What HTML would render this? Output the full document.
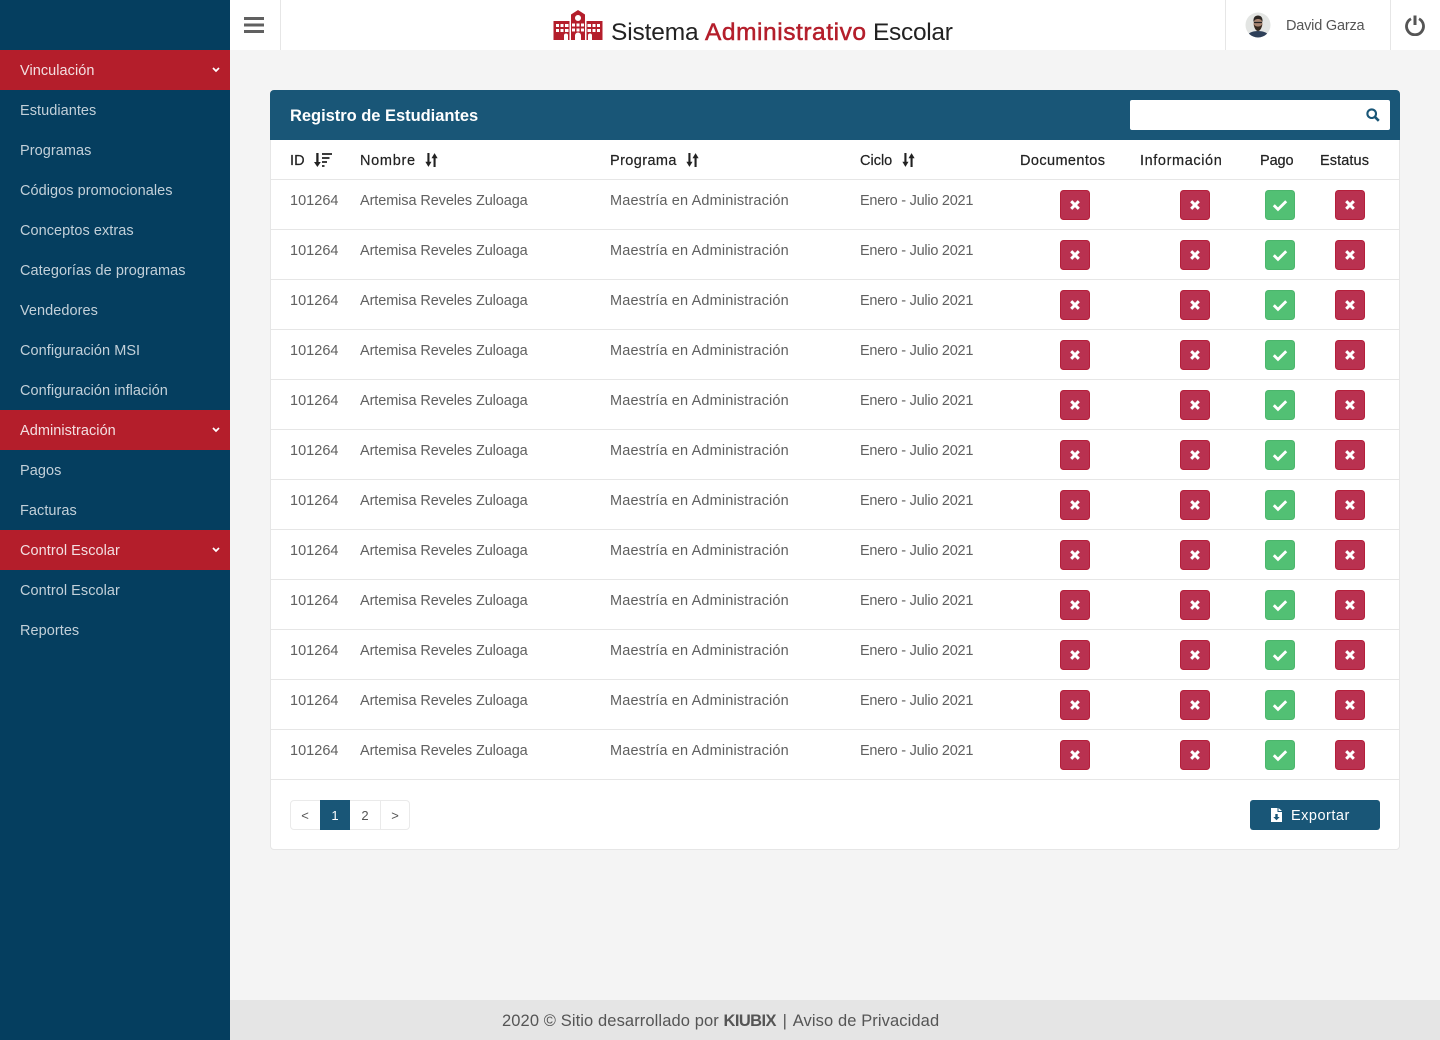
<!DOCTYPE html>
<html lang="es">
<head>
<meta charset="utf-8">
<title>Sistema Administrativo Escolar</title>
<style>
*{box-sizing:border-box}
html,body{margin:0;padding:0}
body{width:1440px;height:1040px;position:relative;overflow:hidden;background:#f4f4f4;font-family:"Liberation Sans",sans-serif;font-size:14.5px;color:#555}
.a{position:absolute;white-space:nowrap}
#side{position:absolute;left:0;top:0;width:230px;height:1040px;background:#053e5f}
.mi{position:absolute;left:0;width:230px;height:40px;line-height:42px;padding-left:20px;color:#c3d0d9;letter-spacing:.05px}
.mi.r{background:#b41e2b;color:#f3dfe1}
.mi svg{position:absolute;left:212px;top:17px}
#top{position:absolute;left:230px;top:0;width:1210px;height:50px;background:#fff}
.vl{position:absolute;top:0;width:1px;height:50px;background:#e6e6e6}
#card{position:absolute;left:270px;top:90px;width:1130px;height:760px;background:#fff;border:1px solid #e6e6e6;border-radius:4px}
#ch{position:absolute;left:270px;top:90px;width:1130px;height:50px;background:#195677;border-radius:4px 4px 0 0}
.row{position:absolute;left:271px;width:1128px;height:50px;border-bottom:1px solid #e6e6e6;color:#606060}
.row span{position:absolute;top:11px;line-height:20px;white-space:nowrap}
.row span:nth-child(1){letter-spacing:.02px}
.row span:nth-child(2){letter-spacing:-.1px}
.row span:nth-child(3){letter-spacing:.15px}
.row span:nth-child(4){letter-spacing:-.25px}
.row svg{position:absolute;top:10px}
.h{position:absolute;top:151px;line-height:20px;color:#222;letter-spacing:.4px;white-space:nowrap;-webkit-text-stroke:.2px #222}
.pg{position:absolute;top:800px;height:30px;width:30px;text-align:center;line-height:31px;font-size:13px;background:#fff;color:#555}
</style>
</head>
<body>
<svg width="0" height="0" style="position:absolute">
<defs>
<symbol id="x" viewBox="0 0 30 30"><rect x=".5" y=".5" width="29" height="29" rx="3" fill="#b93150" stroke="#b41e3a"/><path d="M11.2 11.200l7.600 7.600M18.800 11.200l-7.600 7.600" stroke="#fff" stroke-width="3" fill="none"/></symbol>
<symbol id="c" viewBox="0 0 30 30"><rect x=".5" y=".5" width="29" height="29" rx="3" fill="#52c074" stroke="#4bb56c"/><path d="M8.800 15.200l4.200 4.200 8.200-8.200" stroke="#fff" stroke-width="2.800" fill="none"/></symbol>
<symbol id="s" viewBox="0 0 14 16"><path d="M3.500 0v11" stroke="#222" stroke-width="2.400"/><path d="M0 10h7l-3.500 5.800z" fill="#222"/><path d="M10.500 16V5" stroke="#222" stroke-width="2.400"/><path d="M7 6h7L10.500 .2z" fill="#222"/></symbol>
</defs>
</svg>

<div id="side">
<div class="mi r" style="top:50px">Vinculación<svg width="8" height="6" viewBox="0 0 8 6"><path d="M1 1l3 3 3-3" stroke="#fff" stroke-width="1.700" fill="none"/></svg></div>
<div class="mi" style="top:90px">Estudiantes</div>
<div class="mi" style="top:130px">Programas</div>
<div class="mi" style="top:170px">Códigos promocionales</div>
<div class="mi" style="top:210px">Conceptos extras</div>
<div class="mi" style="top:250px">Categorías de programas</div>
<div class="mi" style="top:290px">Vendedores</div>
<div class="mi" style="top:330px">Configuración MSI</div>
<div class="mi" style="top:370px">Configuración inflación</div>
<div class="mi r" style="top:410px">Administración<svg width="8" height="6" viewBox="0 0 8 6"><path d="M1 1l3 3 3-3" stroke="#fff" stroke-width="1.700" fill="none"/></svg></div>
<div class="mi" style="top:450px">Pagos</div>
<div class="mi" style="top:490px">Facturas</div>
<div class="mi r" style="top:530px">Control Escolar<svg width="8" height="6" viewBox="0 0 8 6"><path d="M1 1l3 3 3-3" stroke="#fff" stroke-width="1.700" fill="none"/></svg></div>
<div class="mi" style="top:570px">Control Escolar</div>
<div class="mi" style="top:610px">Reportes</div>
</div>

<div id="top">
<div class="vl" style="left:50px"></div>
<div class="vl" style="left:995px"></div>
<div class="vl" style="left:1160px"></div>
</div>

<svg class="a" style="left:244px;top:17px" width="20" height="16" viewBox="0 0 20 16"><path d="M0 0h20v3H0zM0 6.500h20v3H0zM0 13h20v3H0z" fill="#606060"/></svg>

<svg class="a" style="left:553px;top:10px" width="50" height="30" viewBox="0 0 50 30">
<path fill-rule="evenodd" fill="#b41e2b" d="M25 0l7 4.500V11h17.500v19H39v-4.500a2 2 0 0 0-4 0V30h-7v-4.500a3 3 0 0 0-6 0V30h-7v-4.500a2 2 0 0 0-4 0V30H.5V11H18V4.500zM25 5a3 3 0 1 0 .01 0zM3 14v3h3v-3zM7.500 14v3h3v-3zM12 14v3h3.500v-3zM3 19v3h3v-3zM7.500 19v3h3v-3zM12 19v3h3.500v-3zM19 13.500v3h3v-3zM23.500 13.500v3h3v-3zM28 13.500v3h3v-3zM19 18.500v3h3v-3zM23.500 18.500v3h3v-3zM28 18.500v3h3v-3zM34.500 14v3H38v-3zM39.500 14v3h3v-3zM44 14v3h3v-3zM34.500 19v3H38v-3zM39.500 19v3h3v-3zM44 19v3h3v-3z"/>
<path fill="#fff" d="M16.500 11h1.500v19h-1.500zM32 11h1.500v19H32z"/>
</svg>
<div class="a" style="left:611px;top:18px;line-height:30px;font-size:24.500px;color:#222;letter-spacing:-.15px">Sistema</div>
<div class="a" style="left:705px;top:18px;line-height:30px;font-size:24.500px;color:#b41e2b;letter-spacing:.55px;-webkit-text-stroke:.5px #b41e2b">Administrativo</div>
<div class="a" style="left:873px;top:18px;line-height:30px;font-size:24.500px;color:#222;letter-spacing:-.3px">Escolar</div>

<svg class="a" style="left:1245px;top:12px" width="26" height="26" viewBox="0 0 26 26">
<defs><clipPath id="av"><circle cx="13" cy="13" r="12.500"/></clipPath></defs>
<circle cx="13" cy="13" r="12.500" fill="#e3e5e3"/>
<g clip-path="url(#av)">
<path d="M2 26c0-5 5-7 11-7s11 2 11 7z" fill="#2e3f58"/>
<ellipse cx="13" cy="11.500" rx="4.500" ry="6.500" fill="#a98672"/>
<path d="M8.500 10c-.5-5 2-6.500 4.500-6.500S18 5 17.500 10c-1-2-2-3-4.500-3S9.500 8 8.500 10z" fill="#2c2622"/>
<path d="M8.800 12c.5 5 2.500 7 4.200 7s3.700-2 4.200-7c-1 2-2.500 2.500-4.200 2.500S9.800 14 8.800 12z" fill="#35291f"/>
<path d="M9 10.500h8" stroke="#222" stroke-width="1.200"/>
</g>
</svg>
<div class="a" style="left:1286px;top:16px;line-height:20px;color:#555;letter-spacing:-.2px">David Garza</div>

<svg class="a" style="left:1405px;top:15px" width="20" height="21" viewBox="0 0 20 21"><path d="M6 3.800a8.500 8.500 0 1 0 8 0" stroke="#555" stroke-width="2.800" fill="none"/><path d="M10 .5v9.500" stroke="#555" stroke-width="3" fill="none"/></svg>

<div id="card"></div>
<div id="ch"></div>
<div class="a" style="left:290px;top:106px;line-height:20px;font-size:16.500px;font-weight:bold;color:#fff;letter-spacing:-.03px">Registro de Estudiantes</div>
<div class="a" style="left:1130px;top:100px;width:260px;height:30px;background:#fff;border-radius:2px"></div>
<svg class="a" style="left:1366px;top:108px" width="14" height="14" viewBox="0 0 14 14"><circle cx="5.700" cy="5.700" r="4.300" stroke="#195677" stroke-width="2.100" fill="none"/><path d="M8.800 8.800l4 4" stroke="#195677" stroke-width="2.600"/></svg>

<div class="h" style="left:290px;letter-spacing:.1px">ID</div>
<svg class="a" style="left:314px;top:153px" width="18" height="14" viewBox="0 0 18 14"><path d="M3.400 0v10" stroke="#222" stroke-width="2.300"/><path d="M0 9h6.800l-3.400 5z" fill="#222"/><path d="M8 1h10M8 5h7.500M8 9h5M8 13h2.500" stroke="#222" stroke-width="1.700"/></svg>
<div class="h" style="left:360px;letter-spacing:.7px">Nombre</div>
<svg class="a" style="left:425px;top:153px" width="13" height="14" viewBox="0 0 14 16"><use href="#s"/></svg>
<div class="h" style="left:610px">Programa</div>
<svg class="a" style="left:686px;top:153px" width="13" height="14" viewBox="0 0 14 16"><use href="#s"/></svg>
<div class="h" style="left:860px;letter-spacing:0">Ciclo</div>
<svg class="a" style="left:902px;top:153px" width="13" height="14" viewBox="0 0 14 16"><use href="#s"/></svg>
<div class="h" style="left:1020px">Documentos</div>
<div class="h" style="left:1140px;letter-spacing:.6px">Información</div>
<div class="h" style="left:1260px;letter-spacing:-.1px">Pago</div>
<div class="h" style="left:1320px;letter-spacing:.1px">Estatus</div>
<div class="a" style="left:271px;top:179px;width:1128px;height:1px;background:#e6e6e6"></div>

<div class="row" style="top:180px"><span style="left:19px">101264</span><span style="left:89px">Artemisa Reveles Zuloaga</span><span style="left:339px">Maestría en Administración</span><span style="left:589px">Enero - Julio 2021</span><svg style="left:789px" width="30" height="30"><use href="#x"/></svg><svg style="left:909px" width="30" height="30"><use href="#x"/></svg><svg style="left:994px" width="30" height="30"><use href="#c"/></svg><svg style="left:1064px" width="30" height="30"><use href="#x"/></svg></div>
<div class="row" style="top:230px"><span style="left:19px">101264</span><span style="left:89px">Artemisa Reveles Zuloaga</span><span style="left:339px">Maestría en Administración</span><span style="left:589px">Enero - Julio 2021</span><svg style="left:789px" width="30" height="30"><use href="#x"/></svg><svg style="left:909px" width="30" height="30"><use href="#x"/></svg><svg style="left:994px" width="30" height="30"><use href="#c"/></svg><svg style="left:1064px" width="30" height="30"><use href="#x"/></svg></div>
<div class="row" style="top:280px"><span style="left:19px">101264</span><span style="left:89px">Artemisa Reveles Zuloaga</span><span style="left:339px">Maestría en Administración</span><span style="left:589px">Enero - Julio 2021</span><svg style="left:789px" width="30" height="30"><use href="#x"/></svg><svg style="left:909px" width="30" height="30"><use href="#x"/></svg><svg style="left:994px" width="30" height="30"><use href="#c"/></svg><svg style="left:1064px" width="30" height="30"><use href="#x"/></svg></div>
<div class="row" style="top:330px"><span style="left:19px">101264</span><span style="left:89px">Artemisa Reveles Zuloaga</span><span style="left:339px">Maestría en Administración</span><span style="left:589px">Enero - Julio 2021</span><svg style="left:789px" width="30" height="30"><use href="#x"/></svg><svg style="left:909px" width="30" height="30"><use href="#x"/></svg><svg style="left:994px" width="30" height="30"><use href="#c"/></svg><svg style="left:1064px" width="30" height="30"><use href="#x"/></svg></div>
<div class="row" style="top:380px"><span style="left:19px">101264</span><span style="left:89px">Artemisa Reveles Zuloaga</span><span style="left:339px">Maestría en Administración</span><span style="left:589px">Enero - Julio 2021</span><svg style="left:789px" width="30" height="30"><use href="#x"/></svg><svg style="left:909px" width="30" height="30"><use href="#x"/></svg><svg style="left:994px" width="30" height="30"><use href="#c"/></svg><svg style="left:1064px" width="30" height="30"><use href="#x"/></svg></div>
<div class="row" style="top:430px"><span style="left:19px">101264</span><span style="left:89px">Artemisa Reveles Zuloaga</span><span style="left:339px">Maestría en Administración</span><span style="left:589px">Enero - Julio 2021</span><svg style="left:789px" width="30" height="30"><use href="#x"/></svg><svg style="left:909px" width="30" height="30"><use href="#x"/></svg><svg style="left:994px" width="30" height="30"><use href="#c"/></svg><svg style="left:1064px" width="30" height="30"><use href="#x"/></svg></div>
<div class="row" style="top:480px"><span style="left:19px">101264</span><span style="left:89px">Artemisa Reveles Zuloaga</span><span style="left:339px">Maestría en Administración</span><span style="left:589px">Enero - Julio 2021</span><svg style="left:789px" width="30" height="30"><use href="#x"/></svg><svg style="left:909px" width="30" height="30"><use href="#x"/></svg><svg style="left:994px" width="30" height="30"><use href="#c"/></svg><svg style="left:1064px" width="30" height="30"><use href="#x"/></svg></div>
<div class="row" style="top:530px"><span style="left:19px">101264</span><span style="left:89px">Artemisa Reveles Zuloaga</span><span style="left:339px">Maestría en Administración</span><span style="left:589px">Enero - Julio 2021</span><svg style="left:789px" width="30" height="30"><use href="#x"/></svg><svg style="left:909px" width="30" height="30"><use href="#x"/></svg><svg style="left:994px" width="30" height="30"><use href="#c"/></svg><svg style="left:1064px" width="30" height="30"><use href="#x"/></svg></div>
<div class="row" style="top:580px"><span style="left:19px">101264</span><span style="left:89px">Artemisa Reveles Zuloaga</span><span style="left:339px">Maestría en Administración</span><span style="left:589px">Enero - Julio 2021</span><svg style="left:789px" width="30" height="30"><use href="#x"/></svg><svg style="left:909px" width="30" height="30"><use href="#x"/></svg><svg style="left:994px" width="30" height="30"><use href="#c"/></svg><svg style="left:1064px" width="30" height="30"><use href="#x"/></svg></div>
<div class="row" style="top:630px"><span style="left:19px">101264</span><span style="left:89px">Artemisa Reveles Zuloaga</span><span style="left:339px">Maestría en Administración</span><span style="left:589px">Enero - Julio 2021</span><svg style="left:789px" width="30" height="30"><use href="#x"/></svg><svg style="left:909px" width="30" height="30"><use href="#x"/></svg><svg style="left:994px" width="30" height="30"><use href="#c"/></svg><svg style="left:1064px" width="30" height="30"><use href="#x"/></svg></div>
<div class="row" style="top:680px"><span style="left:19px">101264</span><span style="left:89px">Artemisa Reveles Zuloaga</span><span style="left:339px">Maestría en Administración</span><span style="left:589px">Enero - Julio 2021</span><svg style="left:789px" width="30" height="30"><use href="#x"/></svg><svg style="left:909px" width="30" height="30"><use href="#x"/></svg><svg style="left:994px" width="30" height="30"><use href="#c"/></svg><svg style="left:1064px" width="30" height="30"><use href="#x"/></svg></div>
<div class="row" style="top:730px"><span style="left:19px">101264</span><span style="left:89px">Artemisa Reveles Zuloaga</span><span style="left:339px">Maestría en Administración</span><span style="left:589px">Enero - Julio 2021</span><svg style="left:789px" width="30" height="30"><use href="#x"/></svg><svg style="left:909px" width="30" height="30"><use href="#x"/></svg><svg style="left:994px" width="30" height="30"><use href="#c"/></svg><svg style="left:1064px" width="30" height="30"><use href="#x"/></svg></div>

<div class="a" style="left:290px;top:800px;width:120px;height:30px;border:1px solid #eaeaea;border-radius:4px;background:#fff"></div>
<div class="pg" style="left:290px;background:none">&lt;</div>
<div class="pg" style="left:320px;background:#195677;color:#fff">1</div>
<div class="pg" style="left:350px;background:none">2</div>
<div class="a" style="left:380px;top:801px;width:1px;height:28px;background:#eaeaea"></div>
<div class="pg" style="left:380px;background:none">&gt;</div>

<div class="a" style="left:1250px;top:800px;width:130px;height:30px;background:#195677;border-radius:3px"></div>
<svg class="a" style="left:1271px;top:808px" width="11" height="14" viewBox="0 0 11 14"><path fill-rule="evenodd" fill="#fff" d="M0 0h6.500v4H11v10H0zM7.500 0L11 3H7.500zM4.300 6v3H2.300l3.200 3.300L8.700 9H6.700V6z"/></svg>
<div class="a" style="left:1291px;top:806px;line-height:20px;color:#fff;letter-spacing:.5px">Exportar</div>

<div class="a" style="left:230px;top:1000px;width:1210px;height:40px;background:#e5e5e5"></div>
<div class="a" style="left:502px;top:1011px;line-height:20px;font-size:16.500px;color:#555;letter-spacing:.1px">2020 © Sitio desarrollado por <b style="letter-spacing:-.6px">KIUBIX</b> <span style="margin:0 2px">|</span> Aviso de Privacidad</div>
</body>
</html>
